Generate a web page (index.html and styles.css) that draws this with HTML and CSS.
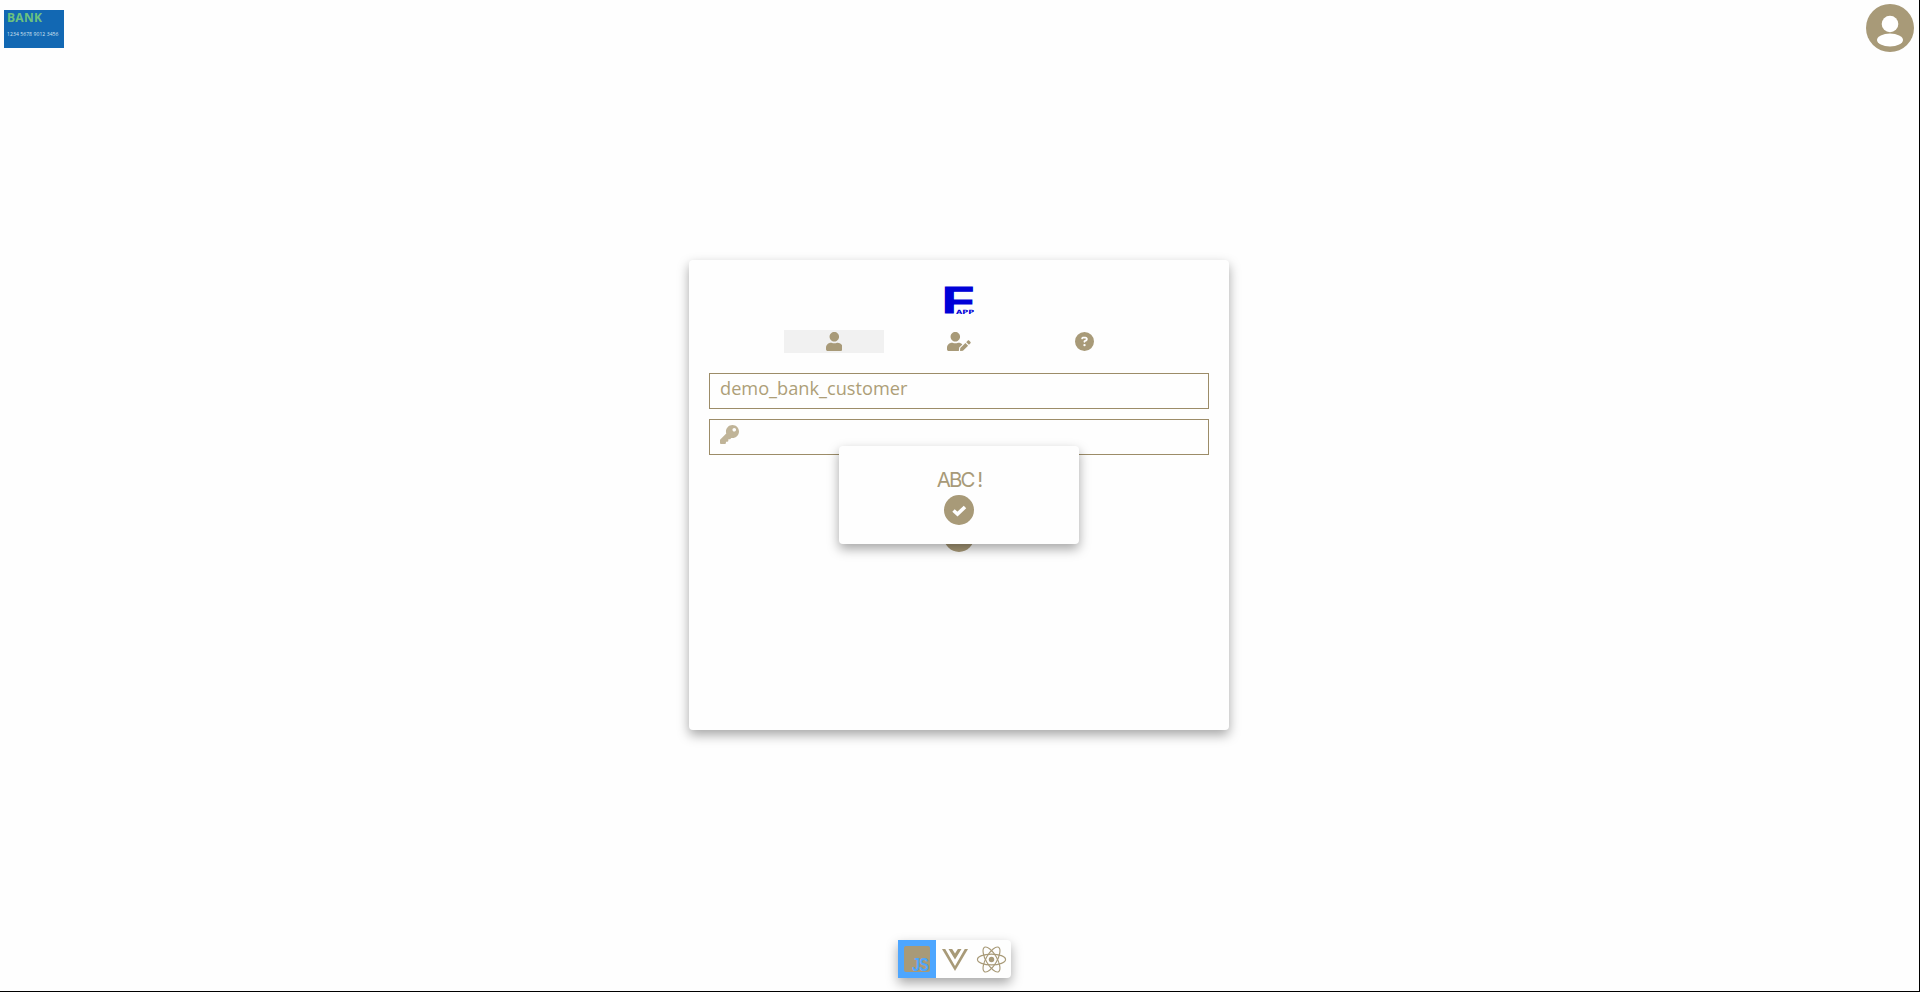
FILE: index.html
```html
<!DOCTYPE html>
<html lang="en">
<head>
  <meta charset="UTF-8">
  <title>Bank login</title>
  <link rel="stylesheet" href="styles.css">
</head>
<body>

  <header class="topbar">
    <div class="bank-card">
      <div class="bank-name">BANK</div>
      <div class="bank-number">1234 5678 9012 3456</div>
    </div>
    <svg class="avatar" viewBox="0 0 48 48">
      <circle cx="24" cy="24" r="24" fill="#a89a78"/>
      <circle cx="24" cy="20" r="8.3" fill="#fff"/>
      <ellipse cx="24" cy="36" rx="13" ry="6.5" fill="#fff"/>
    </svg>
  </header>

  <main class="card">
    <div class="logo">
      <span class="logo-f">F</span>
      <span class="logo-app">APP</span>
    </div>

    <nav class="tabs">
      <div class="tab tab-active">
        <svg class="tab-icon" viewBox="0 0 448 512"><path d="M224 256c70.7 0 128-57.3 128-128S294.7 0 224 0 96 57.3 96 128s57.3 128 128 128zm89.6 32h-16.7c-22.2 10.2-46.9 16-72.9 16s-50.6-5.8-72.9-16h-16.7C60.2 288 0 348.2 0 422.4V464c0 26.5 21.5 48 48 48h352c26.5 0 48-21.5 48-48v-41.6c0-74.2-60.2-134.4-134.4-134.4z"/></svg>
      </div>
      <div class="tab">
        <svg class="tab-icon" viewBox="0 0 640 512"><path d="M224 256c70.7 0 128-57.3 128-128S294.7 0 224 0 96 57.3 96 128s57.3 128 128 128zm89.6 32h-16.7c-22.2 10.2-46.9 16-72.9 16s-50.6-5.8-72.9-16h-16.7C60.2 288 0 348.2 0 422.4V464c0 26.5 21.5 48 48 48h274.9c-2.4-6.8-3.4-14-2.6-21.3l6.8-60.9 1.2-11.1 7.9-7.9 77.3-77.3c-24.5-27.7-60-45.5-99.9-45.5zm45.3 145.3l-6.8 61c-1.1 10.2 7.5 18.8 17.6 17.6l60.9-6.8 137.9-137.9-71.7-71.7-137.9 137.8zM633 268.9L595.1 231c-9.3-9.3-24.5-9.3-33.8 0l-37.8 37.8-4.1 4.1 71.8 71.7 41.8-41.8c9.3-9.4 9.3-24.5 0-33.9z"/></svg>
      </div>
      <div class="tab">
        <svg class="tab-icon" viewBox="0 0 512 512"><path d="M256 512A256 256 0 1 0 256 0a256 256 0 1 0 0 512zM169.8 165.3c7.9-22.3 29.1-37.3 52.8-37.3h58.3c34.9 0 63.1 28.3 63.1 63.1c0 22.6-12.1 43.5-31.7 54.8L280 264.4c-.2 13-10.9 23.6-24 23.6c-13.3 0-24-10.7-24-24V250.5c0-8.6 4.6-16.5 12.1-20.8l44.3-25.4c4.7-2.7 7.6-7.7 7.6-13.1c0-8.4-6.8-15.1-15.1-15.1H222.6c-3.4 0-6.4 2.1-7.5 5.3l-.4 1.2c-4.4 12.5-18.2 19-30.6 14.6s-19-18.2-14.6-30.6l.4-1.2zM224 352a32 32 0 1 1 64 0 32 32 0 1 1 -64 0z"/></svg>
      </div>
    </nav>

    <div class="field">
      <input class="field-input" type="text" value="demo_bank_customer">
    </div>
    <div class="field">
      <svg class="key-icon" viewBox="0 0 512 512"><path d="M512 176.001C512 273.203 433.202 352 336 352c-11.22 0-22.19-1.062-32.827-3.069l-24.012 27.014A23.999 23.999 0 0 1 261.223 384H224v40c0 13.255-10.745 24-24 24h-40v40c0 13.255-10.745 24-24 24H24c-13.255 0-24-10.745-24-24v-78.059c0-6.365 2.529-12.47 7.029-16.971l161.802-161.802C163.108 213.814 160 195.271 160 176 160 78.798 238.797.001 335.999 0 433.488-.001 512 78.511 512 176.001zM336 128c0 26.51 21.49 48 48 48s48-21.49 48-48-21.49-48-48-48-48 21.49-48 48z"/></svg>
      <input class="field-input" type="password">
    </div>

    <div class="submit">
      <svg class="check-icon" viewBox="0 0 30 30">
        <circle cx="15" cy="15" r="15" fill="#a89a78"/>
        <polyline points="9.5,15.5 13.5,19 21,12" fill="none" stroke="#fff" stroke-width="3.6"/>
      </svg>
    </div>

    <!-- popup por cima do formulario -->
    <div class="popup">
      <div class="popup-text">ABC !</div>
      <svg class="check-icon" viewBox="0 0 30 30">
        <circle cx="15" cy="15" r="15" fill="#a89a78"/>
        <polyline points="9.5,15.5 13.5,19 21,12" fill="none" stroke="#fff" stroke-width="3.6"/>
      </svg>
    </div>
  </main>

  <footer class="dock">
    <div class="dock-item dock-active">
      <div class="js-icon"><span>JS</span></div>
    </div>
    <div class="dock-item">
      <svg class="dock-icon" viewBox="0 0 32 28">
        <polygon points="0,1 32,1 16,28" fill="#a89a78"/>
        <polygon points="9,1 16,12 23,1 28,1 16,22 4,1" fill="#fff"/>
        <polygon points="8,1 12.5,1 16,6.5 19.5,1 24,1 16,14" fill="#a89a78"/>
        <polygon points="12.5,1 19.5,1 16,6.5" fill="#fff"/>
      </svg>
    </div>
    <div class="dock-item">
      <svg class="dock-icon react-icon" viewBox="0 0 32 32" fill="none" stroke="#a89a78" stroke-width="1.2">
        <ellipse cx="16" cy="16" rx="14.5" ry="5.6"/>
        <ellipse cx="16" cy="16" rx="14.5" ry="5.6" transform="rotate(60 16 16)"/>
        <ellipse cx="16" cy="16" rx="14.5" ry="5.6" transform="rotate(120 16 16)"/>
        <circle cx="16" cy="16" r="2.8" fill="#a89a78" stroke="none"/>
      </svg>
    </div>
  </footer>

</body>
</html>
```

FILE: styles.css
```css
* {
  box-sizing: border-box;
}

html, body {
  height: 100%;
}

body {
  margin: 0;
  height: 100vh;
  overflow: hidden;
  background: #fefefe;
  border-right: 1px solid #000;
  border-bottom: 1px solid #000;
  font-family: "Open Sans", sans-serif;
  color: #a89a78;
}

.topbar {
  display: flex;
  justify-content: space-between;
  height: 56px;
  padding: 4px 5px 0 4px;
}

.bank-card {
  width: 60px;
  height: 38px;
  margin-top: 6px;
  padding: 1px 3px;
  background: #1268b3;
  font-family: "Open Sans", sans-serif;
}

.bank-name {
  font-size: 12px;
  line-height: 14px;
  font-weight: 700;
  letter-spacing: 0.3px;
  color: #6cc27f;
}

.bank-number {
  margin-top: 6px;
  font-size: 5px;
  line-height: 7px;
  white-space: nowrap;
  letter-spacing: 0.1px;
  color: #d8e6f2;
}

.avatar {
  width: 48px;
  height: 48px;
}

.card {
  position: relative;
  width: 540px;
  height: 470px;
  margin: 204px 0 0 689px;
  padding: 27px 20px 0;
  background: #fefefe;
  border-radius: 4px;
  box-shadow: 0 5px 12px rgba(0, 0, 0, 0.35);
}

.logo {
  position: relative;
  width: 29px;
  height: 27px;
  margin: 0 auto;
  color: #0000d8;
}

.logo-f {
  display: block;
  font-family: "Liberation Sans", sans-serif;
  font-weight: 700;
  font-size: 37px;
  line-height: 27px;
  transform: scaleX(1.42);
  transform-origin: left center;
  -webkit-text-stroke: 1px #0000d8;
  margin-left: -3px;
}

.logo-app {
  position: absolute;
  left: 11px;
  bottom: 0;
  font-family: "DejaVu Sans", sans-serif;
  font-size: 6px;
  line-height: 5px;
  font-weight: 700;
  transform: scaleX(1.35);
  transform-origin: left center;
}

.tabs {
  display: flex;
  justify-content: center;
  gap: 25px;
  margin-top: 16px;
}

.tab {
  display: flex;
  align-items: center;
  justify-content: center;
  width: 100px;
  height: 23px;
}

.tab-active {
  background: #f1f1f1;
}

.tab-icon {
  height: 19px;
  fill: #a89a78;
}

.field {
  display: flex;
  align-items: center;
  height: 36px;
  margin-top: 10px;
  padding-left: 10px;
  border: 1px solid #9c8c68;
}

.tabs + .field {
  margin-top: 20px;
}

.field-input {
  flex: 1;
  min-width: 0;
  padding: 0;
  border: 0;
  outline: 0;
  background: transparent;
  font-family: "Open Sans", sans-serif;
  font-size: 18.2px;
  color: #ad9e78;
  margin-top: -7px;
}

.key-icon {
  width: 19px;
  height: 19px;
  margin-top: -6px;
  fill: #c0b498;
}

.submit {
  display: flex;
  justify-content: center;
  margin-top: 67px;
}

.check-icon {
  width: 30px;
  height: 30px;
}

.popup {
  position: absolute;
  left: 150px;
  top: 186px;
  display: flex;
  flex-direction: column;
  align-items: center;
  width: 240px;
  height: 98px;
  padding-top: 19px;
  background: #fefefe;
  border-radius: 4px;
  box-shadow: 0 5px 12px rgba(0, 0, 0, 0.35);
}

.popup-text {
  height: 30px;
  font-family: "Inter", sans-serif;
  font-weight: 400;
  font-size: 20.5px;
  line-height: 29px;
  letter-spacing: -1.9px;
  color: #a89a78;
}

.dock {
  display: flex;
  width: 113px;
  height: 38px;
  margin: 210px 0 0 898px;
  background: #fefefe;
  border-radius: 0 4px 4px 0;
  box-shadow: 0 5px 12px rgba(0, 0, 0, 0.35);
}

.dock-item {
  display: flex;
  align-items: center;
  justify-content: center;
  width: 38px;
  height: 38px;
}

.dock-active {
  background: #4da6ff;
}

.js-icon {
  display: flex;
  align-items: flex-end;
  justify-content: flex-end;
  width: 26px;
  height: 26px;
  padding-right: 2px;
  border-radius: 2px;
  background: #a89a78;
}

.js-icon span {
  font-family: "Liberation Sans", sans-serif;
  font-size: 18px;
  line-height: 14px;
  font-weight: 700;
  letter-spacing: -1px;
  color: #4da6ff;
  transform: scaleX(0.8);
  transform-origin: right center;
}

.dock-icon {
  width: 26px;
  height: 23px;
}

.react-icon {
  width: 31px;
  height: 31px;
  margin-left: -2px;
}
```
